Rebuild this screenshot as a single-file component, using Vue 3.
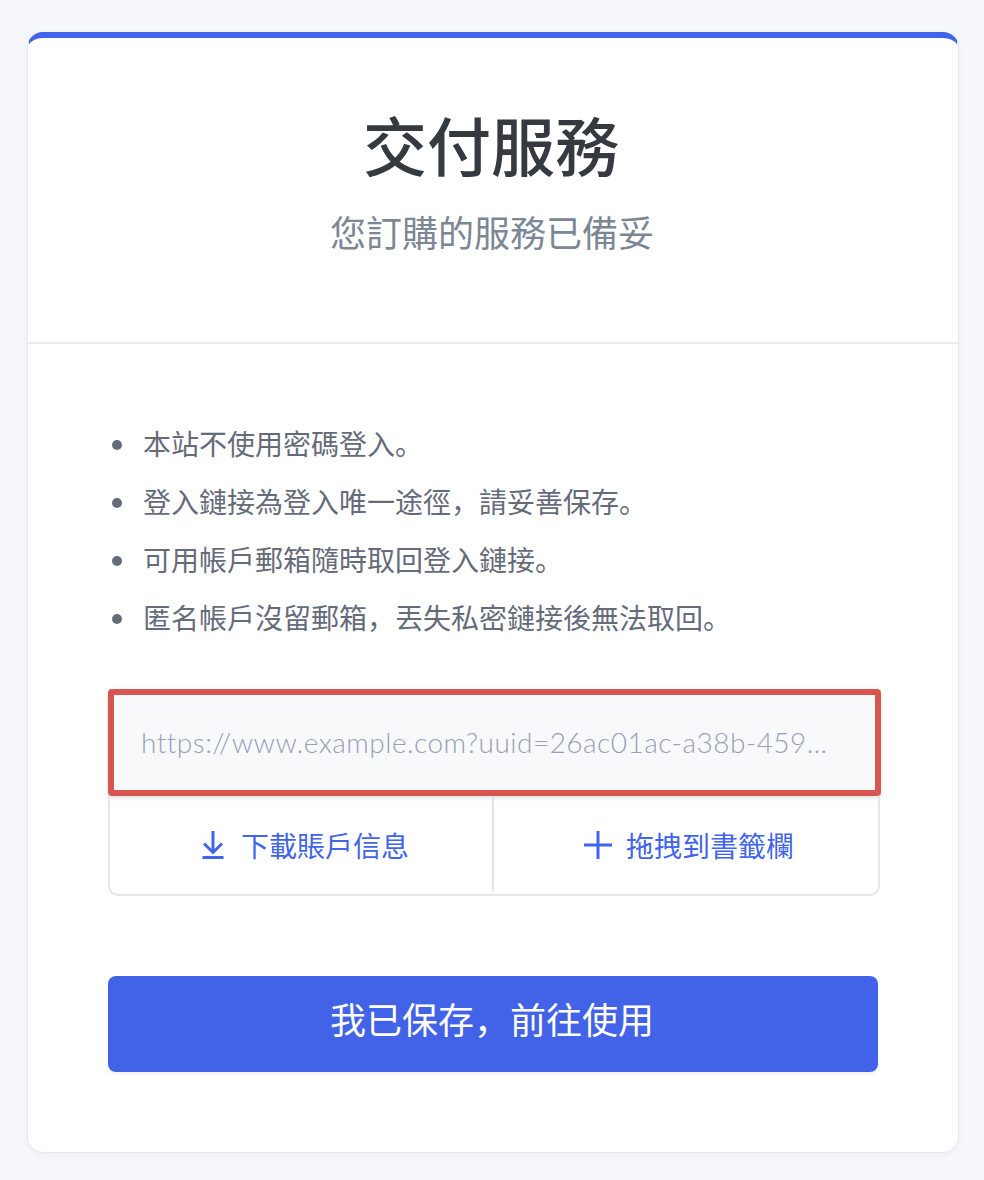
<script setup>
const notes = [
  '本站不使用密碼登入。',
  '登入鏈接為登入唯一途徑，請妥善保存。',
  '可用帳戶郵箱隨時取回登入鏈接。',
  '匿名帳戶沒留郵箱，丟失私密鏈接後無法取回。'
]
const link = 'https://www.example.com?uuid=26ac01ac-a38b-459…'
</script>

<template>
  <div class="page">
    <div class="card">
      <div class="card__head">
        <h1>交付服務</h1>
        <p>您訂購的服務已備妥</p>
      </div>
      <div class="card__body">
        <ul class="notes">
          <li v-for="note in notes" :key="note">{{ note }}</li>
        </ul>
        <div class="link-box">
          <div class="link-box__input">
            <span>{{ link }}</span>
          </div>
          <div class="link-box__actions">
            <a class="action action--first">
              <svg width="24" height="30" viewBox="0 0 24 30" fill="none" stroke="currentColor" stroke-width="3">
                <path d="M12 1v21M3 13.500l9 9 9-9M1.500 27.500h21" />
              </svg>
              <span class="action__text">下載賬戶信息</span>
            </a>
            <a class="action">
              <svg width="28" height="28" viewBox="0 0 28 28" fill="none" stroke="currentColor" stroke-width="3">
                <path d="M14 0v28M0 14h28" />
              </svg>
              <span>拖拽到書籤欄</span>
            </a>
          </div>
        </div>
        <button type="button" class="submit">我已保存，前往使用</button>
      </div>
    </div>
  </div>
</template>

<style>
html, body {
  margin: 0;
  background: #f6f7fa;
}
</style>

<style scoped>
.page {
  box-sizing: border-box;
  height: 1180px;
  padding: 32px 25px 27px 27px;
  font-family: Lato, "Noto Sans CJK SC", sans-serif;
}
.card {
  box-sizing: border-box;
  height: 1121px;
  background: #fff;
  border: 1px solid #e3e7ee;
  border-top: 6px solid #4263eb;
  border-radius: 16px;
  box-shadow: 0 2px 6px rgba(60, 70, 100, 0.05);
}
.card__head {
  height: 306px;
  box-sizing: border-box;
  padding-top: 67px;
  border-bottom: 2px solid #e9ecf1;
  text-align: center;
}
h1 {
  margin: 0;
  padding-right: 4px;
  font-size: 64px;
  line-height: 84px;
  font-weight: 500;
  color: #343a40;
}
p {
  margin: 20px 0 0;
  padding-right: 2px;
  font-size: 36px;
  line-height: 48px;
  color: #7b8794;
}
.card__body {
  padding: 0 80px;
}
.notes {
  margin: 0;
  padding: 71px 0 0 35px;
  list-style: none;
  color: #666b7a;
  font-size: 28px;
  line-height: 58px;
}
.notes li {
  position: relative;
}
.notes li::before {
  content: '';
  position: absolute;
  left: -31px;
  top: 25px;
  width: 10px;
  height: 10px;
  border-radius: 50%;
  background: #666b7a;
}
.link-box {
  margin-top: 42px;
  width: 772px;
}
.link-box__input {
  box-sizing: border-box;
  width: 773px;
  height: 107px;
  padding: 0 44px 2px 27px;
  display: flex;
  align-items: center;
  background: #f8f9fb;
  border: 6px solid #d85652;
  border-radius: 4px;
  box-shadow: 0 2px 4px rgba(0, 0, 0, 0.12);
  color: #98a0b8;
  font-size: 28px;
  font-weight: 300;
  letter-spacing: 0.48px;
  white-space: nowrap;
}
.link-box__actions {
  box-sizing: border-box;
  height: 100px;
  display: flex;
  border: 2px solid #e3e6ec;
  border-top: none;
  border-radius: 0 0 10px 10px;
}
.action {
  flex: 1;
  display: flex;
  align-items: center;
  justify-content: center;
  gap: 14px;
  color: #4263eb;
  font-size: 28px;
  padding-left: 6px;
}
.action--first {
  flex: 0 0 384px;
  box-sizing: border-box;
  position: relative;
}
.action--first::after {
  content: '';
  position: absolute;
  right: 0;
  top: 0;
  bottom: 3px;
  width: 2px;
  background: #dfe3e9;
}
.action__text {
  margin-left: 2px;
}
.submit {
  display: block;
  width: 770px;
  height: 96px;
  margin-top: 80px;
  padding: 0 2px 12px 0;
  background: #4263e8;
  border: none;
  border-radius: 8px;
  box-shadow: 0 3px 4px rgba(0, 0, 0, 0.05);
  color: #fff;
  font-family: inherit;
  font-size: 36px;
}
</style>
